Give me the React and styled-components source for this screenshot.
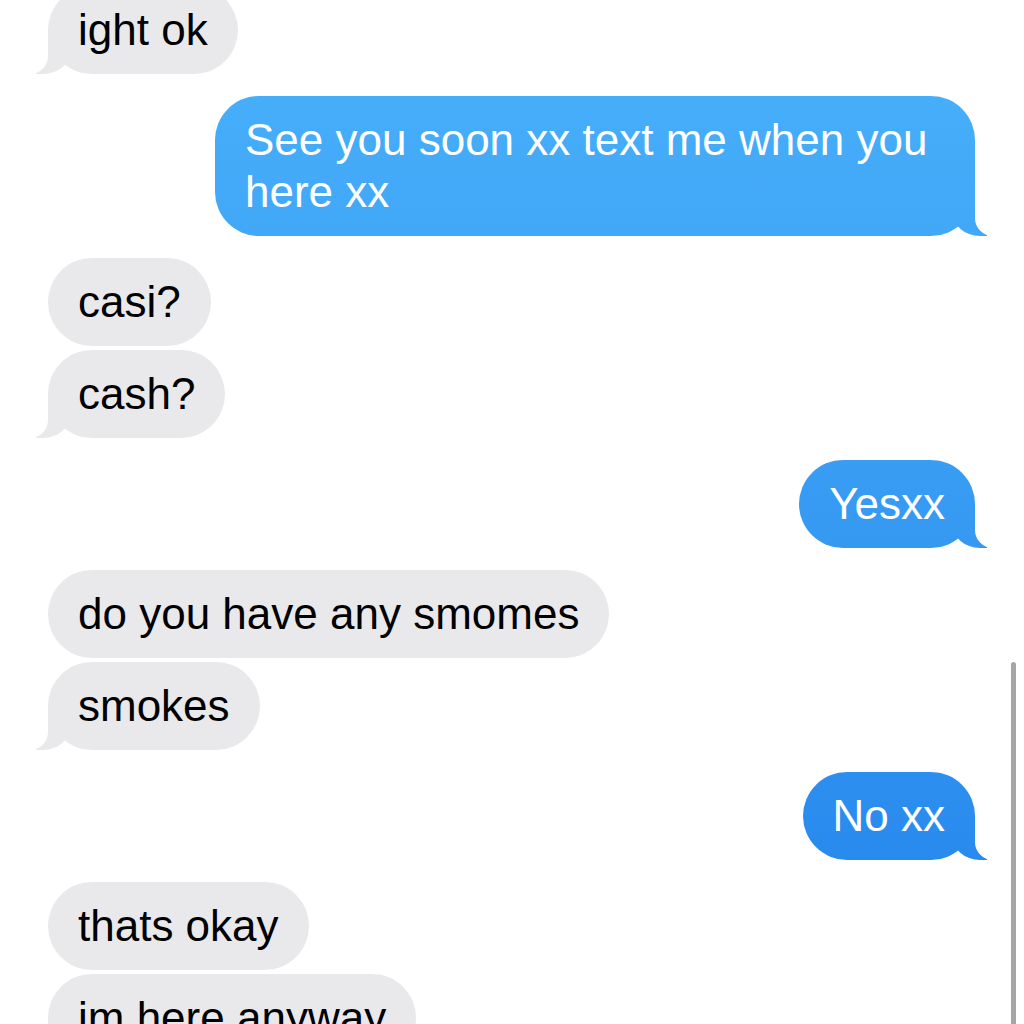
import React from 'react'
import styled, { createGlobalStyle, css } from 'styled-components'

const GlobalStyle = createGlobalStyle`
  html, body {
    margin: 0;
    padding: 0;
    background: #fff;
    height: 1024px;
    overflow: hidden;
  }
  body {
    font-family: "Liberation Sans", Arial, Helvetica, sans-serif;
    -webkit-font-smoothing: antialiased;
  }
`

// the sent bubbles share one gradient pinned to the window, like iOS does
const blue = css`
  background: linear-gradient(to bottom, #4ab2fb 0px, #2383eb 1024px) fixed;
`
const gray = css`
  background: #e9e9eb;
`

const Screen = styled.div`
  position: relative;
  width: 1024px;
  height: 1024px;
  overflow: hidden;
`

const Thread = styled.div`
  display: flex;
  flex-direction: column;
  gap: 22px;
  margin-top: -14px;
  padding: 0 49px 0 48px;
`

const Group = styled.div`
  display: flex;
  flex-direction: column;
  gap: 4px;
  align-items: ${p => (p.$me ? 'flex-end' : 'flex-start')};
`

const Bubble = styled.div`
  position: relative;
  box-sizing: border-box;
  max-width: 760px;
  padding: 18px 30px;
  border-radius: 44px;
  font-size: 44px;
  line-height: 52px;
  color: ${p => (p.$me ? '#fff' : '#000')};
  ${p => (p.$me ? blue : gray)}

  ${p => p.$tail && css`
    &::before,
    &::after {
      content: "";
      position: absolute;
      bottom: 0;
      height: 44px;
    }
    &::before {
      width: 35px;
      ${p.$me ? blue : gray}
      ${p.$me
        ? 'right: -12px; border-bottom-left-radius: 28px 25px;'
        : 'left: -12px; border-bottom-right-radius: 28px 25px;'}
    }
    &::after {
      width: 46px;
      background: #fff;
      ${p.$me
        ? 'right: -46px; border-bottom-left-radius: 18px;'
        : 'left: -46px; border-bottom-right-radius: 18px;'}
    }
  `}
`

const ScrollThumb = styled.div`
  position: absolute;
  top: 662px;
  right: 8px;
  width: 5px;
  height: 380px;
  border-radius: 3px;
  background: #a6a6a6;
  z-index: 2;
`

const groups = [
  { me: false, messages: ['ight ok'] },
  { me: true, messages: ['See you soon xx text me when you here xx'] },
  { me: false, messages: ['casi?', 'cash?'] },
  { me: true, messages: ['Yesxx'] },
  { me: false, messages: ['do you have any smomes', 'smokes'] },
  { me: true, messages: ['No xx'] },
  { me: false, messages: ['thats okay', 'im here anyway'] },
]

export default function App() {
  return (
    <Screen>
      <GlobalStyle />
      <Thread>
        {groups.map((g, i) => (
          <Group key={i} $me={g.me}>
            {g.messages.map((m, j) => (
              <Bubble key={j} $me={g.me} $tail={j === g.messages.length - 1}>
                {m}
              </Bubble>
            ))}
          </Group>
        ))}
      </Thread>
      <ScrollThumb />
    </Screen>
  )
}
